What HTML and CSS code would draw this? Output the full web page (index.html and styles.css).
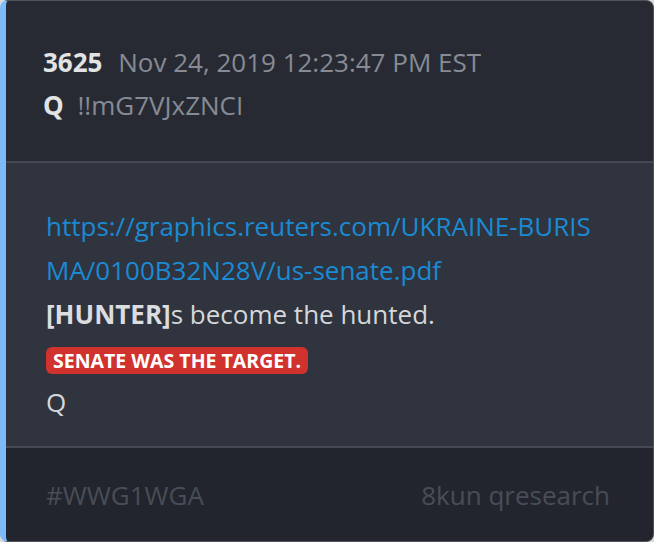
FILE: index.html
```html
<!DOCTYPE html>
<html lang="en">
<head>
  <meta charset="UTF-8">
  <meta name="viewport" content="width=device-width, initial-scale=1.0">
  <title>3625</title>
  <link rel="stylesheet" href="styles.css">
</head>
<body>
  <div class="post">
    <!-- шапка -->
    <div class="post-head">
      <div class="head-row">
        <span class="post-num">3625</span>
        <span class="post-date">Nov 24, 2019 12:23:47 PM EST</span>
      </div>
      <div class="head-row">
        <span class="post-name">Q</span>
        <span class="post-trip">!!mG7VJxZNCI</span>
      </div>
    </div>

    <!-- текст -->
    <div class="post-body">
      <a class="post-link" href="#">https://graphics.reuters.com/UKRAINE-BURIS<br>MA/0100B32N28V/us-senate.pdf</a>
      <p class="post-line"><b>[HUNTER]</b>s become the hunted.</p>
      <div class="post-badge">SENATE WAS THE TARGET.</div>
      <p class="post-line">Q</p>
    </div>

    <!-- підвал -->
    <div class="post-foot">
      <span>#WWG1WGA</span>
      <span>8kun qresearch</span>
    </div>
  </div>
</body>
</html>
```

FILE: styles.css
```css
body {
  margin: 0;
  background-color: #d9dadd;
  font-family: "Open Sans", "DejaVu Sans", sans-serif;
}

.post {
  width: 654px;
  height: 542px;
  box-sizing: border-box;
  border: 1px solid #4d525b;
  border-left: 6px solid #7cbaf8;
  border-radius: 8px;
  overflow: hidden;
  display: flex;
  flex-direction: column;
  background-color: #2f343e;
}

.post-head {
  height: 162px;
  box-sizing: border-box;
  padding: 40px 0 0 37px;
  background-color: #272a32;
  border-bottom: 2px solid #434852;
  font-size: 26px;
}

.head-row {
  line-height: 43px;
}

.post-num {
  font-weight: 700;
  color: #e2e3e5;
  margin-right: 9px;
}

.post-name {
  font-weight: 700;
  color: #e2e3e5;
  margin-right: 7px;
}

.post-date,
.post-trip {
  color: #868b95;
}

.post-body {
  height: 285px;
  box-sizing: border-box;
  padding: 41px 0 0 40px;
  font-size: 26px;
  line-height: 44px;
  color: #d6d7da;
  border-bottom: 2px solid #454a54;
}

.post-link {
  display: block;
  color: #1b8ad3;
  text-decoration: none;
}

.post-line {
  margin: 0;
}

.post-line b {
  color: #dcdde0;
}

.post-badge {
  display: inline-block;
  margin-top: 11px;
  padding: 0 7px;
  height: 27px;
  line-height: 27px;
  border-radius: 6px;
  background-color: #d1322e;
  color: #fff;
  font-size: 19.5px;
  font-weight: 700;
}

.post-foot {
  flex: 1;
  display: flex;
  align-items: center;
  justify-content: space-between;
  padding: 0 43px 0 40px;
  background-color: #22252d;
  color: #484d57;
  font-size: 26px;
}
```
